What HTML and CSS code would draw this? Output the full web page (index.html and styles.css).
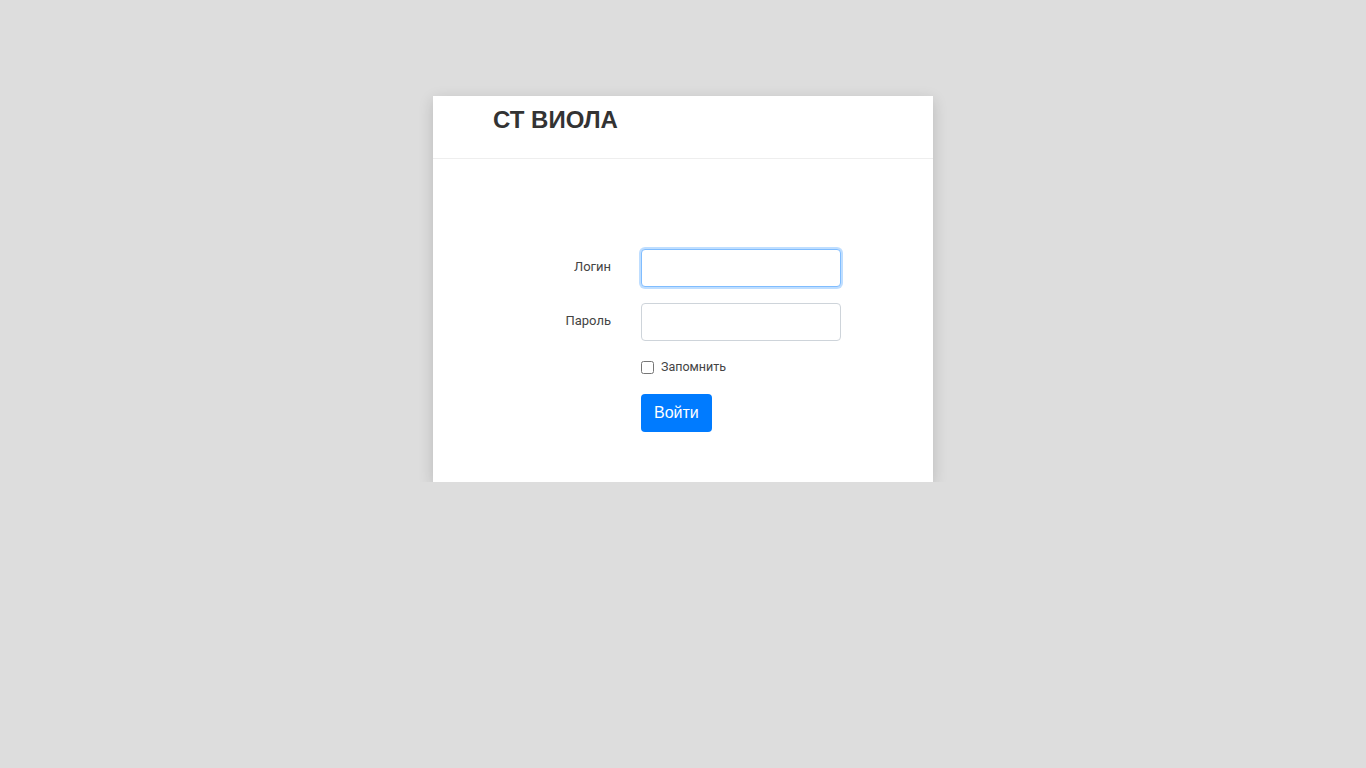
FILE: index.html
```html
<!DOCTYPE html>
<html lang="ru">
<head>
    <meta charset="UTF-8">
    <meta name="viewport" content="width=device-width, initial-scale=1.0">
    <title>СТ ВИОЛА - Вход</title>
    <link rel="stylesheet" href="styles.css">
</head>
<body>

    <div class="login-card">
        <div class="login-header">
            <h1>СТ ВИОЛА</h1>
        </div>

        <form class="login-form">
            <label class="form-label" for="login">Логин</label>
            <input class="form-input is-focused" type="text" id="login" name="login">

            <label class="form-label" for="password">Пароль</label>
            <input class="form-input" type="password" id="password" name="password">

            <div class="form-check">
                <input type="checkbox" id="remember" name="remember">
                <label for="remember">Запомнить</label>
            </div>

            <div class="form-actions">
                <button type="submit" class="btn-primary">Войти</button>
            </div>
        </form>
    </div>

</body>
</html>
```

FILE: styles.css
```css
body, html {
    margin: 0;
    padding: 0;
    box-sizing: border-box;
    background-color: #dddddd;
    font-family: Roboto, "Noto Sans", sans-serif;
    color: #444;
}

*, *::before, *::after {
    box-sizing: inherit;
}

.login-card {
    width: 500px;
    margin: 96px auto 0;
    background-color: #fff;
    box-shadow: 0 4px 14px rgba(0, 0, 0, 0.16);
}

.login-header {
    height: 63px;
    padding: 0 60px;
    border-bottom: 1px solid #eeeeee;
}

.login-header h1 {
    margin: 0;
    padding-top: 8px;
    font-family: "Liberation Sans", Arial, sans-serif;
    font-size: 24px;
    font-weight: bold;
    line-height: 32px;
    color: #333;
}

.login-form {
    display: grid;
    grid-template-columns: 178px 200px;
    column-gap: 30px;
    row-gap: 16px;
    align-items: center;
    padding: 90px 0 50px;
}

.form-label {
    text-align: right;
    font-size: 13px;
    color: #444;
    padding-bottom: 4px;
}

.form-input {
    width: 200px;
    height: 38px;
    padding: 6px 12px;
    border: 1px solid #ced4da;
    border-radius: 4px;
    font-size: 14px;
    outline: none;
}

.form-input.is-focused {
    border-color: #80bdff;
    box-shadow: 0 0 0 2px rgba(0, 123, 255, 0.25);
}

.form-check {
    grid-column: 2;
    display: flex;
    align-items: center;
    gap: 7px;
    height: 18px;
    margin-top: 1px;
    font-size: 12.5px;
    line-height: 18px;
    color: #444;
}

.form-check input {
    margin: 0;
    width: 13px;
    height: 13px;
}

.form-actions {
    grid-column: 2;
    margin-top: 2px;
}

.btn-primary {
    display: block;
    height: 38px;
    padding: 0 13px;
    border: none;
    border-radius: 4px;
    background-color: #007bff;
    color: #fff;
    font-family: "Liberation Sans", Arial, sans-serif;
    font-size: 16px;
    cursor: pointer;
}
```
